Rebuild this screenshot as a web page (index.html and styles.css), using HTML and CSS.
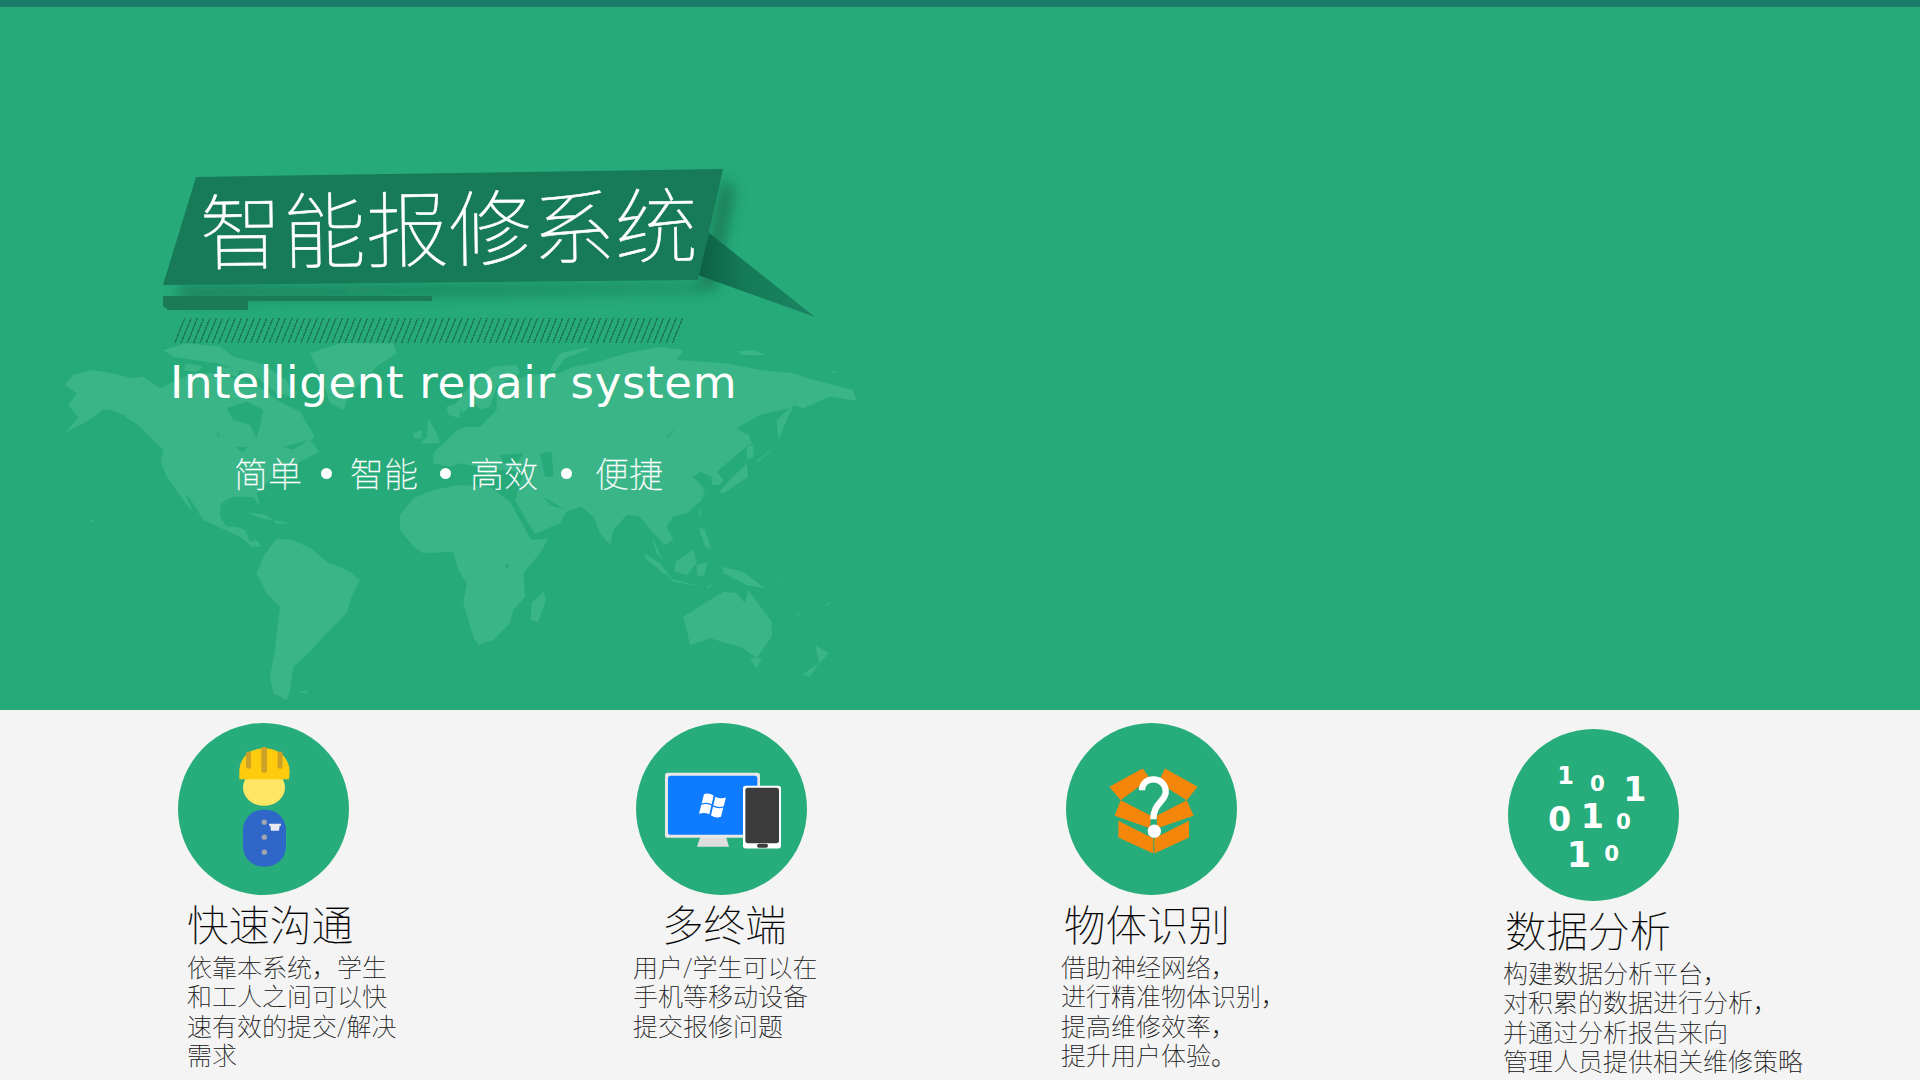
FILE: index.html
```html
<!DOCTYPE html>
<html lang="zh-CN">
<head>
<meta charset="UTF-8" />
<title>智能报修系统</title>
<link rel="stylesheet" href="styles.css">
</head>
<body>
<div class="top-strip"></div>

<!-- Green hero -->
<section class="hero">
  <svg class="world-map" viewBox="0 -60 2400 1200">
    <g class="land">
      <!-- Americas -->
      <polygon points="15,310 60,285 100,262 125,240 150,238 190,255 240,290 270,320 310,360 302,395 320,440 355,490 385,530 402,548 375,495 390,505 430,570 490,598 540,620 575,650 605,650 590,630 570,635 555,600 530,590 500,590 480,560 482,520 520,500 580,502 600,530 590,490 640,440 690,410 730,390 778,365 750,330 765,320 720,245 660,215 610,180 590,165 540,150 470,130 400,130 320,165 300,175 250,140 220,145 130,125 90,120 40,135 15,165 50,190 25,225 55,262" />
      <polygon points="310,60 380,40 480,50 520,80 600,100 650,140 610,150 540,120 470,100 400,90 340,80" />
      <polygon points="380,100 430,110 410,125 370,120" />
      <polygon points="480,110 540,115 530,140 480,130" />
      <polygon points="600,100 680,150 700,200 650,190 600,150" />
      <polygon points="750,70 840,40 1000,40 1010,70 950,110 870,190 850,240 810,220 780,130" />
      <polygon points="590,730 610,680 650,625 700,630 760,660 800,695 860,720 900,750 875,800 860,850 800,910 740,975 700,1010 690,1080 680,1110 640,1090 630,1040 645,960 660,830 620,790" />
      <polygon points="720,1085 745,1080 740,1090 720,1090" />
      <polygon points="565,548 610,552 640,570 600,565" />
      <polygon points="640,570 690,580 650,582" />
      <polygon points="92,570 102,570 98,578" />
      <!-- Europe, Africa -->
      <polygon points="1160,230 1200,215 1200,265 1165,255" />
      <polygon points="1105,265 1130,310 1140,340 1080,340 1100,320" />
      <polygon points="1060,310 1085,300 1085,325 1062,325" />
      <polygon points="1020,600 1020,555 1060,505 1120,480 1200,465 1290,470 1350,515 1405,615 1415,630 1465,625 1440,670 1390,730 1395,800 1360,840 1350,880 1300,930 1255,945 1240,920 1210,820 1220,760 1195,720 1180,665 1090,670 1060,650" />
      <polygon points="1450,785 1458,810 1435,875 1412,870 1415,820" />
    </g>
    <g class="land" transform="translate(1200 0)">
      <!-- Eurasia -->
      <polygon points="-80,400 -80,370 -50,340 -10,300 20,290 60,290 110,240 110,180 190,140 260,130 300,130 340,110 400,100 500,70 600,50 670,60 650,90 800,100 900,120 1000,130 1060,150 1180,180 1190,212 1110,200 1030,235 1000,225 955,330 950,270 990,235 960,240 900,255 830,295 870,320 860,350 800,400 770,425 790,450 780,465 755,465 755,440 720,425 700,440 735,480 725,510 680,550 640,560 620,590 640,630 615,645 580,610 540,560 500,555 460,600 450,645 420,610 400,560 365,530 320,545 300,580 225,612 165,510 190,430 140,420 110,420 90,440 50,410 0,400 -30,410" />
      <polygon points="-10,220 40,150 100,110 170,105 180,130 110,170 90,230 60,240 40,215 10,250" />
      <polygon points="270,120 300,70 390,50 380,60 315,85 285,125" />
      <polygon points="830,65 880,60 920,75 850,75" />
      <polygon points="1110,125 1135,125 1120,130" />
      <polygon points="780,485 800,460 850,410 860,400 865,440 790,490" />
      <polygon points="860,350 880,345 880,385 860,385" />
      <polygon points="860,300 875,340 865,350" />
      <polygon points="890,392 950,345 895,396" />
      <!-- Indonesia, Oceania -->
      <polygon points="720,535 725,555 715,555" />
      <polygon points="715,590 735,600 755,660 735,650" />
      <polygon points="575,620 610,690 590,670" />
      <polygon points="550,670 600,700 635,745 610,730 560,690" />
      <polygon points="625,745 730,770 640,755" />
      <polygon points="645,695 700,660 710,700 680,735 645,725" />
      <polygon points="710,705 745,695 730,740 710,735" />
      <polygon points="785,710 850,725 915,775 860,765 790,730" />
      <polygon points="935,740 985,770 940,745" />
      <polygon points="740,770 765,760 745,775" />
      <polygon points="1095,825 1115,815 1100,830" />
      <polygon points="1010,845 1025,858 1012,855" />
      <polygon points="670,860 735,820 790,785 830,790 855,820 865,780 935,875 935,920 890,985 850,955 820,945 750,925 690,945 680,900" />
      <polygon points="870,985 905,985 890,1018" />
      <polygon points="1065,945 1105,970 1080,1000 1075,985" />
      <polygon points="1025,1035 1075,1000 1050,1040" />
    </g>
    <!-- seas and lakes cut back out of the land -->
    <g class="sea">
      <polygon points="500,235 560,215 610,240 600,290 590,325 570,285 520,270" />
      <polygon points="470,305 482,320 472,318" />
      <polygon points="525,352 560,350 550,368" />
      <polygon points="670,350 745,330 700,360" />
    </g>
    <g class="sea" transform="translate(1200 0)">
      <polygon points="20,245 110,240 60,290 20,285" />
      <polygon points="120,375 190,370 175,395 130,400" />
      <polygon points="240,370 275,365 280,440 255,440" />
      <polygon points="250,500 300,530 320,540 270,525" />
      <polygon points="620,320 645,295 625,325" />
      <polygon points="135,705 150,700 140,718" />
    </g>
  </svg>

  <div class="banner">
    <svg class="banner-shape" viewBox="163 169 652 149">
      <defs>
        <linearGradient id="tail" x1="0" y1="0" x2="1" y2="0">
          <stop offset="0" stop-color="#0d5f45" />
          <stop offset="0.4" stop-color="#147a58" />
          <stop offset="1" stop-color="#1b8563" />
        </linearGradient>
        <filter id="soft" x="-10%" y="-20%" width="120%" height="150%">
          <feGaussianBlur stdDeviation="7" />
        </filter>
      </defs>
      <polygon points="700,285 722,178 734,190 714,290 182,299 176,287" fill="#0b4a35" opacity="0.5" filter="url(#soft)" />
      <polygon points="709,233 815,317 698,275" fill="url(#tail)" />
      <polygon points="196,177 723,169 698,280 163,285" fill="#177a59" />
      <polygon points="163,296 432,296 432,301 248,301 248,310 168,310 163,306" fill="#1b7b59" />
    </svg>
    <h1 class="banner-title">智能报修系统</h1>
  </div>

  <div class="hatch"></div>
  <p class="subtitle">Intelligent repair system</p>

  <div class="tags">
    <span class="tag">简单</span>
    <span class="dot"></span>
    <span class="tag">智能</span>
    <span class="dot dot-wide"></span>
    <span class="tag">高效</span>
    <span class="dot dot-wider"></span>
    <span class="tag">便捷</span>
  </div>
</section>

<!-- Feature columns -->
<section class="features">
  <div class="feature feature-chat">
    <div class="circle">
      <svg class="icon" viewBox="54 38 513 513">
        <ellipse cx="312" cy="230" rx="63" ry="55" fill="#ffe766" />
        <path d="M238 205 L238 180 C240 135 275 112 313 112 C352 112 386 135 389 180 L387 205 Z" fill="#ffcb0e" />
        <rect x="258" y="122" width="15" height="52" rx="7" fill="#cda128" />
        <rect x="304" y="108" width="17" height="78" rx="8" fill="#cda128" />
        <rect x="353" y="122" width="15" height="52" rx="7" fill="#cda128" />
        <rect x="249" y="297" width="129" height="170" rx="60" fill="#2e67c8" />
        <circle cx="313" cy="334" r="8" fill="#a3a6b0" />
        <circle cx="313" cy="379" r="8" fill="#a3a6b0" />
        <circle cx="313" cy="424" r="8" fill="#a3a6b0" />
        <path d="M327 339 H363 V345 H359 L357 360 H333 L331 345 H327 Z" fill="#e8e8ee" />
      </svg>
    </div>
    <h3 class="feature-title">快速沟通</h3>
    <p class="feature-text">依靠本系统，学生<br>和工人之间可以快<br>速有效的提交/解决<br>需求</p>
  </div>

  <div class="feature feature-device">
    <div class="circle">
      <svg class="icon" viewBox="48 38 513 513">
        <polygon points="241,378 318,378 327,408 231,408" fill="#dedede" />
        <rect x="135" y="186" width="285" height="195" rx="8" fill="#e8e8e8" />
        <rect x="144" y="195" width="268" height="177" rx="8" fill="#0f7cff" />
        <g fill="#fff">
          <path d="M252 250 C262 246 272 250 281 254 L275 280 C265 276 256 274 245 278 Z" />
          <path d="M286 258 C296 263 306 264 318 260 L311 286 C301 290 291 288 280 284 Z" />
          <path d="M244 282 C255 278 264 280 274 284 L268 310 C258 306 248 305 237 309 Z" />
          <path d="M279 288 C289 292 300 294 310 290 L303 318 C292 322 283 319 273 314 Z" />
        </g>
        <rect x="369" y="225" width="114" height="188" rx="8" fill="#fff" />
        <rect x="376" y="231" width="101" height="166" rx="8" fill="#3c3c3c" />
        <rect x="411" y="399" width="33" height="12" rx="6" fill="#3c3c3c" />
      </svg>
    </div>
    <h3 class="feature-title">多终端</h3>
    <p class="feature-text">用户/学生可以在<br>手机等移动设备<br>提交报修问题</p>
  </div>

  <div class="feature feature-detect">
    <div class="circle">
      <svg class="icon" viewBox="48 38 513 513">
        <g fill="#f3860b">
          <polygon points="178,228 278,173 300,203 212,268" />
          <polygon points="345,173 443,228 410,268 325,215" />
          <polygon points="212,268 303,315 300,352 194,315" />
          <polygon points="410,268 320,315 322,352 431,315" />
          <polygon points="205,330 300,378 310,382 310,428 205,380" />
          <polygon points="417,330 322,378 313,382 313,428 417,380" />
        </g>
        <path d="M276 238 C276 192 350 195 347 245 C345 272 310 278 310 325" fill="none" stroke="#fff" stroke-width="19" />
        <circle cx="313" cy="361" r="20" fill="#fff" />
      </svg>
    </div>
    <h3 class="feature-title">物体识别</h3>
    <p class="feature-text">借助神经网络，<br>进行精准物体识别，<br>提高维修效率，<br>提升用户体验。</p>
  </div>

  <div class="feature feature-data">
    <div class="circle">
      <svg class="icon" viewBox="54 27 513 513">
        <g class="digits">
          <text x="202" y="190" font-size="72">1</text>
          <text x="300" y="210" font-size="64">0</text>
          <text x="400" y="242" font-size="100">1</text>
          <text x="174" y="330" font-size="100">0</text>
          <text x="272" y="322" font-size="100">1</text>
          <text x="378" y="325" font-size="64">0</text>
          <text x="230" y="440" font-size="105">1</text>
          <text x="343" y="420" font-size="64">0</text>
        </g>
      </svg>
    </div>
    <h3 class="feature-title">数据分析</h3>
    <p class="feature-text">构建数据分析平台，<br>对积累的数据进行分析，<br>并通过分析报告来向<br>管理人员提供相关维修策略</p>
  </div>
</section>
</body>
</html>
```

FILE: styles.css
```css
html, body {
  margin: 0;
  padding: 0;
}
body {
  width: 1920px;
  height: 1080px;
  overflow: hidden;
  background: #f4f4f4;
  font-family: "Noto Sans CJK SC", "Noto Sans", sans-serif;
}
.top-strip {
  height: 7px;
  background: #1b7b67;
}
/* Hero */
.hero {
  position: relative;
  height: 703px;
  padding-top: 162px;
  box-sizing: border-box;
  background: #26aa79;
  overflow: hidden;
  color: #fff;
}
.world-map {
  position: absolute;
  left: 60px;
  top: 303px;
  width: 800px;
  height: 400px;
}
.land { fill: #3ab588; }
.sea { fill: #26aa79; }
.banner {
  position: relative;
  width: 652px;
  height: 149px;
  margin-left: 163px;
}
.banner-shape {
  position: absolute;
  left: 0;
  top: 0;
  width: 652px;
  height: 149px;
  overflow: visible;
}
.banner-title {
  position: relative;
  margin: 0;
  padding: 9px 0 0 36px;
  font-size: 83px;
  font-weight: 100;
  line-height: 100px;
  white-space: nowrap;
  -webkit-text-stroke: 0.5px #fff;
  transform: rotate(-0.8deg);
  transform-origin: left top;
}
.hatch {
  position: relative;
  width: 502px;
  height: 25px;
  margin-left: 179px;
  background: repeating-linear-gradient(90deg, #1c7c5c 0, #1c7c5c 1.6px, transparent 1.6px, transparent 6.3px);
  transform: skewX(-22deg);
}
.subtitle {
  position: relative;
  margin: 10px 0 0 170px;
  font-family: "DejaVu Sans", sans-serif;
  font-size: 45px;
  line-height: 60px;
  letter-spacing: 0.66px;
}
.tags {
  position: relative;
  display: flex;
  align-items: center;
  margin: 36px 0 0 234px;
  height: 48px;
}
.tag {
  font-size: 34px;
  font-weight: 100;
  line-height: 48px;
  -webkit-text-stroke: 0.3px #fff;
}
.dot {
  width: 11px;
  height: 11px;
  margin: 0 18px 0 19px;
  border-radius: 50%;
  background: #fff;
}
.dot-wide { margin: 0 19px 0 22px; }
.dot-wider { margin: 0 23px; }
/* Features */
.features {
  position: relative;
  height: 370px;
}
.feature {
  position: absolute;
  top: 13px;
}
.feature-chat { left: 178px; }
.feature-device { left: 636px; }
.feature-detect { left: 1066px; }
.feature-data { left: 1508px; top: 19px; }
.circle {
  width: 171px;
  height: 172px;
  border-radius: 50%;
  background: #27ac7b;
}
.icon {
  display: block;
  width: 171px;
  height: 172px;
}
.digits {
  font-family: "DejaVu Sans", sans-serif;
  font-weight: 700;
  fill: #fff;
}
.feature-title {
  margin: 2px 0 0 9px;
  font-size: 41.5px;
  font-weight: 100;
  line-height: 52px;
  color: #000;
  white-space: nowrap;
  -webkit-text-stroke: 0.2px #000;
}
.feature-text {
  margin: 5px 0 0 9px;
  font-family: "Roboto", "Noto Sans CJK SC", sans-serif;
  font-size: 25px;
  font-weight: 100;
  line-height: 29.4px;
  color: #111;
  white-space: nowrap;
  -webkit-text-stroke: 0.15px #111;
}
.feature-device .feature-title { margin-left: 26px; }
.feature-device .feature-text { margin-left: -3px; }
.feature-detect .feature-title { margin-left: -2px; }
.feature-detect .feature-text { margin-left: -5px; }
.feature-data .feature-title { margin-left: -3px; }
.feature-data .feature-text { margin-left: -5px; }
```
